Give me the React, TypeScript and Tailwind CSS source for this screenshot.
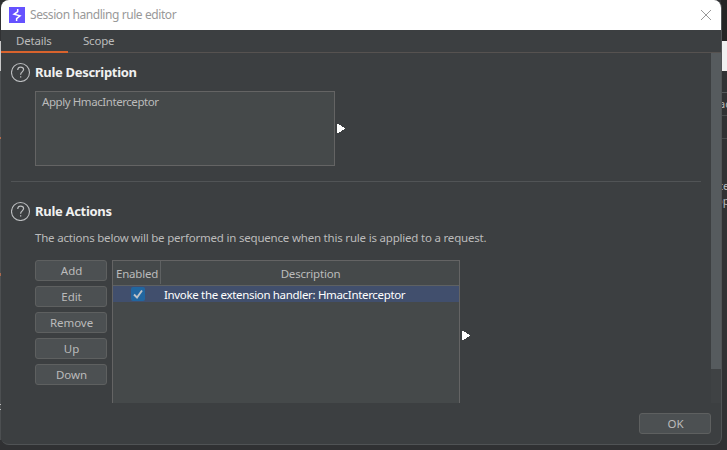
import type { ReactNode } from "react";

function HelpIcon() {
  return (
    <svg width="20" height="20" viewBox="0 0 20 20" fill="none" stroke="#bbbdbf" className="block shrink-0">
      <circle cx="9.5" cy="10.5" r="9" strokeWidth="1.100" />
      <path d="M6.700 8C6.800 6.100 7.900 5.200 9.600 5.200c1.800 0 3 .9 3 2.400 0 2.200-3 2.400-3 5.100" strokeWidth="1.200" />
      <path d="M9 14.800h1.300" strokeWidth="1.300" />
    </svg>
  );
}

function Arrow() {
  return (
    <svg width="8" height="9" viewBox="0 0 8 9" shapeRendering="crispEdges" className="block shrink-0">
      <path d="M0 0H2V1H4V2H5V3H7V4H8V5H7V6H5V7H4V8H2V9H0Z" fill="#fff" />
    </svg>
  );
}

function Button({ children }: { children: ReactNode }) {
  return (
    <button className="flex h-[21px] w-[72px] shrink-0 items-center justify-center rounded-[3px] border border-[#5e6060] bg-[#4c5052] pl-px text-[11.5px] leading-none tracking-[-0.05px] text-[#bbbbbb]">
      {children}
    </button>
  );
}

function Heading({ children }: { children: ReactNode }) {
  return (
    <div className="flex h-5 items-center gap-1 pl-[10px]">
      <HelpIcon />
      <h2 className="text-[13px] font-bold leading-none tracking-[-0.3px] text-[#f0f0f0]">{children}</h2>
    </div>
  );
}

function Backdrop() {
  return (
    <div className="absolute inset-0 overflow-hidden bg-[#303133]">
      <div className="ml-auto flex h-[445px] w-[6px] flex-col overflow-hidden text-[11px] leading-[14px] text-[#bbbbbb]">
        <div className="h-[41px] bg-[#242424]" />
        <div className="h-[30px] bg-[#f0f0f0]" />
        <div className="h-[22px] border-b border-[#55585a] bg-[#303234]" />
        <div className="h-[23px] border-b border-[#4a4d4f] pt-[4px]"><span className="-ml-[2px]">ac</span></div>
        <div className="h-[23px] border-b border-[#494b4d]" />
        <div className="mt-[40px]"><span className="-ml-[2px]">te</span></div>
        <div className="mt-[1px]"><span className="-ml-[5px]">op</span></div>
      </div>
    </div>
  );
}

export default function App() {
  return (
    <div className="relative h-[450px] w-[727px] overflow-hidden font-['Noto_Sans',sans-serif] text-[11.5px] text-[#bbbbbb]">
      <Backdrop />
      <div className="absolute left-0 top-[41px] h-[30px] w-px bg-[#c8c8c8]" />
      <div className="absolute left-0 top-[71px] h-[369px] w-px bg-[#4c4f51]" />
      <div className="absolute left-0 top-[137px] h-[2px] w-px bg-[#b66b4a]" />
      <div className="absolute left-0 top-[273px] h-[3px] w-px bg-[#a8694f]" />
      <div className="absolute left-0 top-[404px] h-px w-px bg-[#bbbbbb]" />
      <div className="absolute left-0 top-[409px] h-px w-px bg-[#bbbbbb]" />
      <main className="relative ml-px flex h-[445px] w-[721px] flex-col overflow-hidden rounded-[8px] border-b border-r border-[#505355] bg-[#3c3f41]">
        <header className="flex h-[30px] shrink-0 items-center bg-white pl-2 pr-[9px] text-[12px] text-[#999999]">
          <svg width="16" height="16" viewBox="0 0 16 16" className="mr-[5px] block">
            <path d="M0 0h16v16H0z" fill="#6552ff" />
            <path d="M8.700 2v2.600L5 7.300 11 8.900 7.600 11.600V14" fill="none" stroke="#fff" strokeWidth="1.500" />
          </svg>
          <h1 className="leading-none tracking-[-0.42px]">Session handling rule editor</h1>
          <svg width="12" height="12" viewBox="0 0 12 12" stroke="#999" className="ml-auto block">
            <path d="M1 1l10 10M11 1 1 11" />
          </svg>
        </header>
        <nav className="flex h-[23px] shrink-0 border-b border-[#565250] leading-[22px] tracking-[-0.2px]">
          <div className="z-10 h-[23px] w-[67px] border-b-2 border-[#d9632d] pl-[15px]">Details</div>
          <div className="pl-[15px]">Scope</div>
        </nav>
        <div className="flex h-[350px] shrink-0">
          <div className="flex flex-1 flex-col overflow-hidden pt-[9px]">
            <Heading>Rule Description</Heading>
            <div className="mt-[9px] flex items-center pl-[34px]">
              <div className="mr-[2px] h-[75px] w-[300px] border border-[#646464] bg-[#45494a] pl-[6px] pt-[2px] leading-[15px] tracking-[-0.43px]">Apply HmacInterceptor</div>
              <Arrow />
            </div>
            <div className="ml-[10px] mt-[15px] h-px w-[690px] shrink-0 bg-[#515456]" />
            <div className="mt-[19px]"><Heading>Rule Actions</Heading></div>
            <p className="mt-[9px] h-[16px] shrink-0 pl-[34px] leading-[16px] tracking-[-0.2px]">The actions below will be performed in sequence when this rule is applied to a request.</p>
            <div className="mt-[14px] flex pl-[34px]">
              <div className="mr-[5px] flex flex-col gap-[5px]">
                <Button>Add</Button><Button>Edit</Button><Button>Remove</Button><Button>Up</Button><Button>Down</Button>
              </div>
              <div className="mr-[2px] h-[150px] w-[348px] border border-[#646464] bg-[#45494a]">
                <div className="flex h-[25px] border-b border-[#5e6162] leading-[25px] tracking-[-0.2px]">
                  <div className="mb-px w-[48px] border-r border-[#5e6162] pl-[3px]">Enabled</div>
                  <div className="flex-1 pl-px text-center">Description</div>
                </div>
                <div className="flex h-[16px] items-center bg-[#414f6d] text-white">
                  <div className="flex w-[48px] pl-[18px]">
                    <svg width="14" height="14" viewBox="0 0 14 14" className="block">
                      <rect width="14" height="14" rx="2" fill="#2166a0" />
                      <path d="m3 7.500 3 3L11 3.500" fill="none" stroke="#bfc3c7" strokeWidth="1.900" />
                    </svg>
                  </div>
                  <div className="pl-[3px] pt-[2px] leading-none tracking-[-0.33px]">Invoke the extension handler: HmacInterceptor</div>
                </div>
              </div>
              <div className="pt-[71px]"><Arrow /></div>
            </div>
          </div>
          <div className="w-[10px] bg-[#3f4244]"><div className="h-[316px] bg-[#565b5e]" /></div>
        </div>
        <footer className="flex justify-end pr-[10px] pt-[10px]"><Button>OK</Button></footer>
      </main>
    </div>
  );
}
